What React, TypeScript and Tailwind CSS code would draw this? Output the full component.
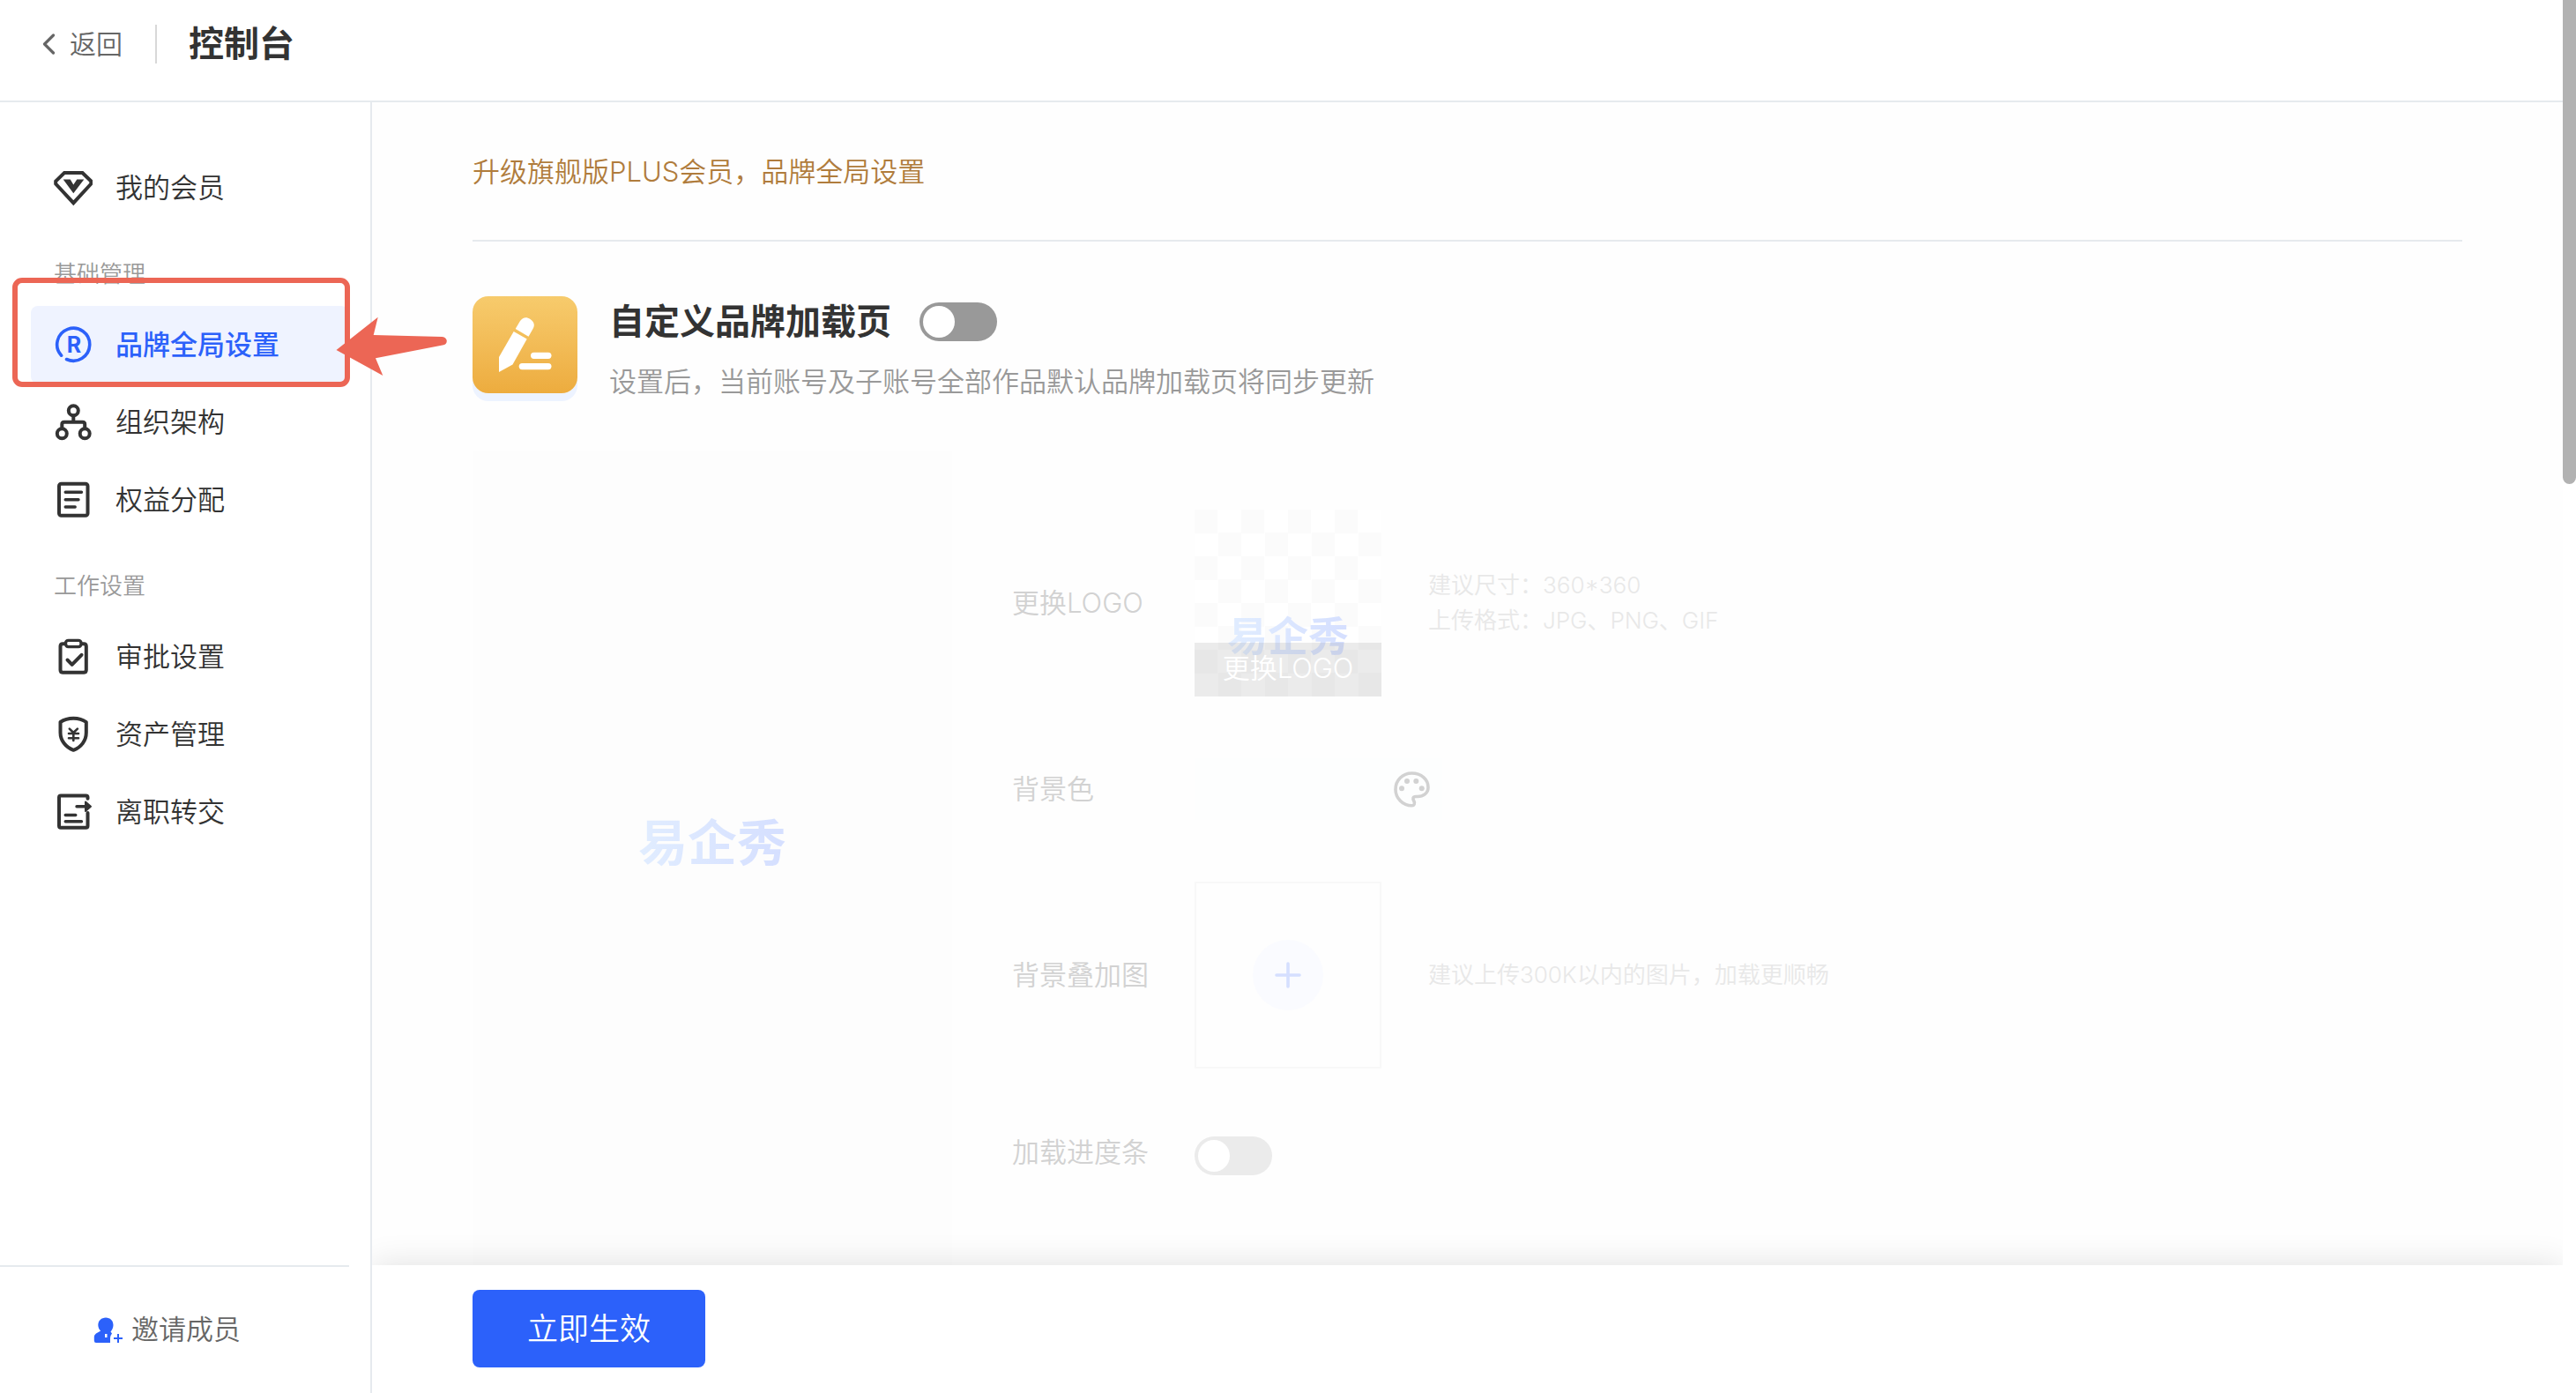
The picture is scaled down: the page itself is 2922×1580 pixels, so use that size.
import { useState } from "react";
import type { ReactNode } from "react";
import clsx from "clsx";

interface NavEntry {
  id: string;
  label: string;
  icon: ReactNode;
}

interface NavGroup {
  title?: string;
  items: NavEntry[];
}

function NavIcon({ children }: { children: ReactNode }) {
  return (
    <svg
      viewBox="0 0 44 44"
      className="size-11 shrink-0"
      fill="none"
      stroke="currentColor"
      strokeWidth="4"
      strokeLinecap="round"
      strokeLinejoin="round"
      aria-hidden="true"
    >
      {children}
    </svg>
  );
}

const NAV: NavGroup[] = [
  {
    items: [
      {
        id: "member",
        label: "我的会员",
        icon: (
          <NavIcon>
            <path d="M12 5H32.5L42.3 14.5V17.5L22.3 39.2 2.2 17.5V14.5Z" strokeLinejoin="miter" />
            <path d="M10.7 12.5H18.7L22.3 18.5 26.3 12.5H34.3L22.3 28.3Z" fill="currentColor" stroke="none" />
          </NavIcon>
        ),
      },
    ],
  },
  {
    title: "基础管理",
    items: [
      {
        id: "brand",
        label: "品牌全局设置",
        icon: (
          <NavIcon>
            <path d="M8.6 34.2A18.5 18.5 0 1 1 14.5 38.5" strokeWidth="3.6" />
            <text
              x="23"
              y="31"
              textAnchor="middle"
              fontSize="25"
              fontWeight="700"
              fill="currentColor"
              stroke="none"
              fontFamily="Inter, sans-serif"
            >
              R
            </text>
          </NavIcon>
        ),
      },
      {
        id: "org",
        label: "组织架构",
        icon: (
          <NavIcon>
            <circle cx="22.3" cy="8.7" r="5.5" />
            <circle cx="9.3" cy="34.7" r="5.5" />
            <circle cx="35.2" cy="34.7" r="5.5" />
            <path d="M22.3 14.5V21.7M9.3 29V24.2Q9.3 21.7 11.8 21.7H32.7Q35.2 21.7 35.2 24.2V29" />
          </NavIcon>
        ),
      },
      {
        id: "benefit",
        label: "权益分配",
        icon: (
          <NavIcon>
            <rect x="6" y="3.7" width="32.5" height="36" rx="2.5" />
            <path d="M13.2 13.3H31.5M13.2 21.7H28M13.2 30H24.2" strokeWidth="3.4" />
          </NavIcon>
        ),
      },
    ],
  },
  {
    title: "工作设置",
    items: [
      {
        id: "approval",
        label: "审批设置",
        icon: (
          <NavIcon>
            <path d="M12 7.3H10.2Q7.5 7.3 7.5 10V37Q7.5 39.8 10.2 39.8H34Q36.8 39.8 36.8 37V10Q36.8 7.3 34 7.3H32.5" />
            <rect x="13.5" y="3.4" width="17.5" height="7.2" rx="3" strokeWidth="3.4" />
            <path d="M15.5 25.5L20.7 30.8 31.5 19.8" />
          </NavIcon>
        ),
      },
      {
        id: "asset",
        label: "资产管理",
        icon: (
          <NavIcon>
            <path d="M22.3 3.7C28 3.7 33 5.2 36.8 8V20C36.8 29 31 36.6 22.3 39.8C13.5 36.6 7.5 29 7.5 20V8C11.5 5.2 16.5 3.7 22.3 3.7Z" />
            <path d="M17.8 15.6L22.3 20 26.9 15.6M22.3 20V29M17 21H28M17 26.3H28" strokeWidth="2.6" />
          </NavIcon>
        ),
      },
      {
        id: "handover",
        label: "离职转交",
        icon: (
          <NavIcon>
            <path d="M38.5 6.8V5.5Q38.5 3.5 36.5 3.5H8Q6 3.5 6 5.5V37.7Q6 39.7 8 39.7H36.5Q38.5 39.7 38.5 37.7V23" />
            <path d="M26 15.7H36M13.2 25.5H24.8M13.2 32.8H31.5" strokeWidth="3.4" />
            <path d="M36 10.5L42 15.7 36 21Z" fill="currentColor" strokeWidth="2" />
          </NavIcon>
        ),
      },
    ],
  },
];

// Red callout around the highlighted entry, with an arrow pointing at it.
function Callout() {
  return (
    <>
      <span className="pointer-events-none absolute -top-8 -right-0.5 -bottom-1 -left-[21px] rounded-[11px] border-6 border-[#ec6655]" />
      <svg
        viewBox="0 0 128 70"
        className="pointer-events-none absolute top-3 left-[346px] h-[70px] w-32 max-w-none"
        fill="#ec6655"
        aria-hidden="true"
      >
        <path d="M0.5 38L47.7 0.7 42.7 21 120.5 23C127.5 23.6 127.5 32 121 32.6L45 47.3 53.3 67Z" />
      </svg>
    </>
  );
}

function Switch({ label, checked, onChange, muted }: {
  label: string;
  checked: boolean;
  onChange: (next: boolean) => void;
  muted?: boolean;
}) {
  return (
    <input
      type="checkbox"
      role="switch"
      aria-label={label}
      checked={checked}
      onChange={(e) => onChange(e.target.checked)}
      className={clsx(
        "flex h-11 w-22 shrink-0 cursor-pointer appearance-none items-center rounded-full px-1 before:size-9 before:rounded-full before:bg-white checked:justify-end checked:bg-[#2c61fa]",
        muted ? "bg-[#ebebeb]" : "bg-[#999]",
      )}
    />
  );
}

function BrandMark({ className }: { className?: string }) {
  return (
    <span
      className={clsx(
        "bg-linear-to-r from-[#e1edff] to-[#d5dfff] bg-clip-text font-bold text-transparent",
        className,
      )}
    >
      易企秀
    </span>
  );
}

function Sidebar({ active, onSelect }: { active: string; onSelect: (id: string) => void }) {
  return (
    <aside className="relative z-10 flex w-[422px] shrink-0 flex-col border-r-2 border-[#e6eaee] bg-white">
      <nav className="flex-1 pt-[53px] pr-[25px] pl-[35px]">
        {NAV.map((group, i) => (
          <div key={i}>
            {group.title ? (
              <h2 className="pt-[34px] pb-4 pl-[26px] text-[26px] leading-10 text-[#999]">{group.title}</h2>
            ) : null}
            {group.items.map((item) => (
              <div key={item.id} className="relative">
                <button
                  type="button"
                  onClick={() => onSelect(item.id)}
                  className={clsx(
                    "flex h-22 w-full items-center gap-[26px] rounded-lg pl-[26px] text-[31px]",
                    active === item.id ? "bg-[#eff3ff] font-medium text-[#2c61fa]" : "text-[#333]",
                  )}
                >
                  {item.icon}
                  {item.label}
                </button>
                {item.id === "brand" ? <Callout /> : null}
              </div>
            ))}
          </div>
        ))}
      </nav>
      <div className="mr-6 border-t-2 border-[#e6eaee]">
        <button type="button" className="flex h-[143px] w-full items-center gap-2.5 pl-[106px] text-[31px] text-[#666]">
          <svg viewBox="0 0 33 30" className="h-[30px] w-[33px] shrink-0" aria-hidden="true">
            <path
              d="M14 0.5C19 0.5 22.5 4 22.5 9C22.5 12 21 14.5 19.5 16.5L21 18.5Q19 21 19 23.5V29H3Q0.8 29 0.8 26.5V22Q0.8 20 3 18.5L8.2 15.5C6.5 14 5.3 11.5 5.3 9C5.3 4 9 0.5 14 0.5Z"
              fill="#2c61fa"
            />
            <path d="M13 19H15.5V23H13Z" fill="#fff" />
            <path d="M28 19V29M23 24H33" stroke="#2c61fa" strokeWidth="2" />
          </svg>
          邀请成员
        </button>
      </div>
    </aside>
  );
}

export default function App() {
  const [active, setActive] = useState("brand");
  const [enabled, setEnabled] = useState(false);
  const [progress, setProgress] = useState(false);
  const [color, setColor] = useState("");

  return (
    <div className="flex h-screen bg-white font-['Inter','Noto_Sans_CJK_SC',sans-serif] font-[350] text-[#333]">
      <div className="flex min-w-0 flex-1 flex-col">
        <header className="flex items-center border-b-2 border-[#e6eaee] pt-6 pb-[38px] pl-12">
          <a href="#back" className="flex items-center gap-4 text-[30px] leading-[52px] text-[#666]">
            <svg
              viewBox="0 0 15 24"
              className="h-6 w-[15px]"
              fill="none"
              stroke="currentColor"
              strokeWidth="3.2"
              strokeLinecap="round"
              strokeLinejoin="round"
              aria-hidden="true"
            >
              <path d="M12.5 2L2.5 12 12.5 22" />
            </svg>
            返回
          </a>
          <span className="mr-9 ml-[37px] h-11 w-0.5 bg-[#d8d8d8]" />
          <h1 className="text-[40px] leading-[52px] font-bold">控制台</h1>
        </header>

        <div className="flex min-h-0 flex-1">
          <Sidebar active={active} onSelect={setActive} />

          <main className="flex min-w-0 flex-1 flex-col overflow-hidden">
            <div className="min-h-0 flex-1 overflow-hidden bg-[#fefefe] px-[114px]">
              <p className="border-b-2 border-[#e6eaee] pt-[54px] pb-[52px] text-[31px] leading-[50px] text-[#b07c3c]">
                升级旗舰版PLUS会员，品牌全局设置
              </p>

              <section className="flex gap-9 pt-[62px] pb-[57px]">
                <span className="h-[110px] w-[119px] shrink-0 rounded-[18px] bg-linear-to-b from-[#f7cb6c] to-[#edac3e] shadow-[0_9px_0_#edf3ff]">
                  <svg viewBox="0 0 119 110" fill="#fff" aria-hidden="true">
                    <path d="M48.7 37L54 28C57 24 61 23 65.5 26C70 29 71 33 68.5 37L63.5 45.7Z" />
                    <path d="M46.7 40L61.7 48.5 45.5 77.5 30 86V69Z" />
                    <rect x="66" y="63.7" width="23.5" height="7.2" rx="3.6" />
                    <rect x="52.7" y="76" width="36.8" height="7.2" rx="3.6" />
                  </svg>
                </span>
                <div className="flex flex-col gap-[17px]">
                  <div className="flex items-center gap-8">
                    <h2 className="text-[40px] leading-[58px] font-bold">自定义品牌加载页</h2>
                    <Switch label="自定义品牌加载页" checked={enabled} onChange={setEnabled} />
                  </div>
                  <p className="text-[31px] leading-11 text-[#999]">
                    设置后，当前账号及子账号全部作品默认品牌加载页将同步更新
                  </p>
                </div>
              </section>

              <section className="flex gap-[68px]">
                <div className="flex min-h-[960px] w-[544px] shrink-0 justify-center bg-[#fdfdfd] pt-[414px]">
                  <BrandMark className="h-15 text-[56px] leading-15" />
                </div>

                <div className="flex flex-col gap-[70px] pt-[66px] text-[31px] leading-[50px] text-[#d2d2d2]">
                  <div className="flex items-center">
                    <span className="w-[207px]">更换LOGO</span>
                    <button
                      type="button"
                      className="relative flex size-[212px] flex-col justify-end bg-[conic-gradient(#fff_25%,#fbfbfb_0_50%,#fff_0_75%,#fbfbfb_0)] bg-size-[25%_25%]"
                    >
                      <BrandMark className="absolute inset-x-0 top-[119px] mx-auto w-fit text-[46px] leading-12" />
                      <span className="relative bg-[#999]/20 pt-1 pb-[7px] text-white">更换LOGO</span>
                    </button>
                    <p className="ml-[53px] text-[26px] leading-10 text-[#e8e8e8]">
                      建议尺寸：360*360
                      <br />
                      上传格式：JPG、PNG、GIF
                    </p>
                  </div>

                  <div className="flex items-center">
                    <label htmlFor="bg-color" className="w-[207px]">背景色</label>
                    <div className="flex h-[70px] w-[281px] items-center bg-[#fdfefe] pr-[14px]">
                      <input
                        id="bg-color"
                        value={color}
                        onChange={(e) => setColor(e.target.value)}
                        className="min-w-0 flex-1 px-4 outline-none"
                      />
                      <button type="button" aria-label="选择颜色">
                        <svg viewBox="0 0 41 41" className="size-[41px]" aria-hidden="true">
                          <path
                            d="M20.5 2C31 2 39 9 39 18C39 25 33 28.5 27 28.5H25C21.5 28.5 21.3 31 22.8 33.5C24.5 36.5 23 38.8 20.5 38.8C10 38.8 2 30 2 20.4C2 10 10 2 20.5 2Z"
                            fill="none"
                            stroke="currentColor"
                            strokeWidth="3.6"
                          />
                          <g fill="currentColor">
                            <circle cx="9" cy="19.3" r="3" />
                            <circle cx="15" cy="11" r="3" />
                            <circle cx="25.3" cy="11" r="3" />
                            <circle cx="31.7" cy="19.3" r="3" />
                          </g>
                        </svg>
                      </button>
                    </div>
                  </div>

                  <div className="flex items-center">
                    <span className="w-[207px]">背景叠加图</span>
                    <button
                      type="button"
                      aria-label="上传背景叠加图"
                      className="flex size-[212px] items-center justify-center border-2 border-[#f8f8f8]"
                    >
                      <span className="flex size-20 items-center justify-center rounded-full bg-[#fafbff]">
                        <svg
                          viewBox="0 0 30 30"
                          className="size-[30px]"
                          stroke="#d5dfff"
                          strokeWidth="3.6"
                          strokeLinecap="round"
                          aria-hidden="true"
                        >
                          <path d="M15 2V28M2 15H28" />
                        </svg>
                      </span>
                    </button>
                    <p className="ml-[53px] text-[26px] leading-10 text-[#e8e8e8]">
                      建议上传300K以内的图片，加载更顺畅
                    </p>
                  </div>

                  <div className="flex h-[58px] items-start">
                    <span className="w-[207px]">加载进度条</span>
                    <span className="flex self-center">
                      <Switch label="加载进度条" checked={progress} onChange={setProgress} muted />
                    </span>
                  </div>
                </div>
              </section>
            </div>

            <footer className="relative bg-white px-[114px] pt-7 pb-[29px] shadow-[0_0_36px_rgba(0,0,0,0.12)]">
              <button type="button" className="h-22 w-[264px] rounded-lg bg-[#2c61fa] text-[35px] text-white">
                立即生效
              </button>
            </footer>
          </main>
        </div>
      </div>

      {/* Scroll track */}
      <div className="w-[15px] shrink-0">
        <div className="h-[549px] rounded-b-full bg-[#b2b2b2]" />
      </div>
    </div>
  );
}
